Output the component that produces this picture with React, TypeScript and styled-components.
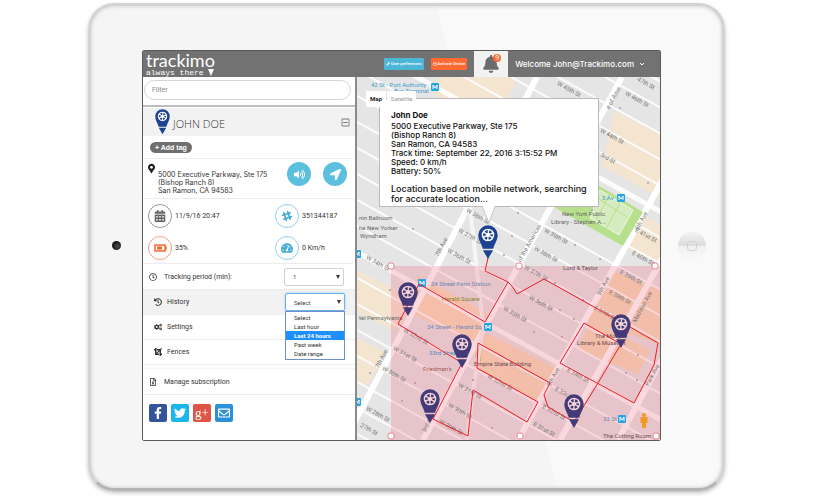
import React from "react";
import styled, { createGlobalStyle } from "styled-components";
import {
  FaBell,
  FaCalendarAlt,
  FaCogs,
  FaCrop,
  FaFacebookF,
  FaHistory,
  FaLocationArrow,
  FaMapMarkerAlt,
  FaPowerOff,
  FaRegClock,
  FaRegEnvelope,
  FaRegFileExcel,
  FaRegMinusSquare,
  FaSlackHash,
  FaTachometerAlt,
  FaTwitter,
  FaVolumeUp,
  FaWrench,
} from "react-icons/fa";

const GlobalStyle = createGlobalStyle`
  *, *::before, *::after { box-sizing: border-box; }
  body { margin: 0; background: #fff; font-family: Roboto, sans-serif; color: #333; }
  button, input, select { font-family: inherit; margin: 0; }
  h1, h2, p, ul, dl, dd { margin: 0; padding: 0; }
`;

const geometric = `Inter, "Liberation Sans", sans-serif`;

const Page = styled.main`
  padding: 3px 96px 5px 88px;
  overflow: hidden;
`;

const Tablet = styled.div`
  display: grid;
  grid-template-columns: 51px minmax(0, 1fr) 61px;
  align-items: center;
  padding: 44px 0 47px;
  border: 3px solid #d3d3d3;
  border-bottom-color: #b4b4b4;
  border-radius: 26px;
  background: linear-gradient(76deg, #f5f5f5 62%, #f9f9f9 62%);
  box-shadow: inset 0 0 3px 1px #d8d8d8, 0 2px 5px -1px rgba(0, 0, 0, 0.35);
`;

const Camera = styled.span`
  justify-self: center;
  width: 9px;
  height: 9px;
  border-radius: 50%;
  background: radial-gradient(circle at 60% 60%, #4a4a55, #111 70%);
`;

const HomeButton = styled.button`
  display: grid;
  place-items: center;
  justify-self: center;
  width: 28px;
  height: 28px;
  padding: 0;
  border: 0;
  border-radius: 50%;
  background: linear-gradient(#f1f1f1, #dcdcdc 50%, #f0f0f0 50%, #f8f8f8);
  &::after {
    content: "";
    width: 10px;
    height: 10px;
    border: 1px solid #d2d2d2;
    border-radius: 3px;
  }
`;

const Screen = styled.div`
  border: 1px solid #5a5a5a;
  border-radius: 2px;
  background: #fff;
  overflow: hidden;
`;

const Header = styled.header`
  display: flex;
  align-items: center;
  height: 26px;
  background: #727272;
  color: #fff;
`;

const Brand = styled.a`
  position: relative;
  display: grid;
  margin-left: 3px;
  margin-right: auto;
  color: #fff;
  text-decoration: none;
`;

const BrandName = styled.span`
  font: 400 18px/17px Lato, sans-serif;
`;

const BrandTag = styled.span`
  font: 8px/8px "Liberation Mono", monospace;
`;

const BrandTip = styled.svg`
  position: absolute;
  right: 0;
  bottom: 1px;
  width: 8px;
  height: 7px;
`;

const ActionButton = styled.button<{ $color: string }>`
  display: flex;
  align-items: center;
  justify-content: center;
  gap: 1px;
  height: 12px;
  margin-right: 7px;
  padding: 0 2px;
  border: 0;
  border-radius: 1px;
  background: ${(p) => p.$color};
  color: #fff;
  font-size: 4px;
  font-weight: 500;
  line-height: 12px;
`;

const BellButton = styled.button`
  position: relative;
  display: grid;
  place-items: center;
  width: 34px;
  height: 26px;
  padding: 0;
  border: 0;
  background: #f2f2f2;
  color: #6c6c6c;
  font-size: 18px;
`;

const Badge = styled.span`
  position: absolute;
  top: 3px;
  right: 7px;
  width: 8px;
  height: 8px;
  border-radius: 50%;
  background: #ff6a33;
  color: #fff;
  font: 7px/8px Roboto, sans-serif;
`;

const UserMenu = styled.button`
  display: flex;
  align-items: center;
  gap: 5px;
  padding: 0 15px 0 7px;
  border: 0;
  background: none;
  color: #fff;
  font: 500 8px/12px ${geometric};
  white-space: nowrap;
`;

const Body = styled.div`
  display: grid;
  grid-template-columns: minmax(214px, 2fr) minmax(0, 3fr);
`;

const Sidebar = styled.aside`
  border-right: 2px solid #8a8a8a;
  background: #fff;
`;

const FilterBar = styled.div`
  padding: 3px 4px 5px 1px;
  border-bottom: 2px solid #bdbdbd;
  margin-bottom: 1px;
`;

const FilterInput = styled.input`
  display: block;
  width: 100%;
  height: 20px;
  padding: 0 7px;
  border: 1px solid #d6d6d6;
  border-radius: 10px;
  font-size: 7px;
  &::placeholder { color: #888; }
`;

const NameBar = styled.div`
  display: flex;
  align-items: center;
  height: 28px;
  padding: 0 5px 0 11px;
  background: #f2f2f2;
`;

const Name = styled.h1`
  flex: 1;
  margin-left: 2px;
  padding-top: 4px;
  color: #333;
  font: 300 11px/14px "Open Sans", sans-serif;
`;

const IconButton = styled.button`
  display: flex;
  padding: 0;
  border: 0;
  background: none;
  color: #777;
  font-size: 9px;
`;

const Section = styled.div`
  display: flex;
  border-bottom: 1px solid #ececec;
  margin-right: 2px;
`;

const TagSection = styled(Section)`
  height: 23px;
  align-items: center;
  padding-left: 7px;
`;

const TagButton = styled.button`
  height: 11px;
  padding: 0 5px;
  border: 0;
  border-radius: 6px;
  background: #6f6f6f;
  color: #fff;
  font: bold 7px/11px "Liberation Sans", sans-serif;
`;

const AddressSection = styled(Section)`
  height: 40px;
  gap: 3px;
  padding: 3px 6px 0 5px;
`;

const AddressPin = styled(FaMapMarkerAlt)`
  flex: none;
  width: 7px;
  height: 11px;
  margin-top: 1px;
  color: #222;
`;

const Address = styled.p`
  flex: 1;
  padding-top: 9px;
  color: #333;
  font: 7px/8px ${geometric};
  white-space: nowrap;
`;

const RoundButton = styled.button`
  display: grid;
  place-items: center;
  width: 24px;
  height: 24px;
  margin-left: 9px;
  padding: 0;
  border: 0;
  border-radius: 50%;
  background: #5bbfdd;
  color: #fff;
  font-size: 11px;
`;

const Stats = styled.dl`
  display: grid;
  grid-template-columns: 127px 1fr;
  row-gap: 8px;
  height: 65px;
  margin-right: 2px;
  padding: 5px 0 3px 5px;
  border-bottom: 1px solid #ececec;
`;

const Stat = styled.div`
  display: flex;
  align-items: center;
  gap: 3px;
  height: 24px;
  font-size: 7px;
  line-height: 10px;
`;

const StatIcon = styled.dt<{ $ring: string; $ink: string }>`
  display: grid;
  place-items: center;
  width: 24px;
  height: 24px;
  border: 1px solid ${(p) => p.$ring};
  border-radius: 50%;
  color: ${(p) => p.$ink};
  font-size: 12px;
`;

const MenuRow = styled.div<{ $active?: boolean; $inset?: boolean }>`
  position: relative;
  display: flex;
  align-items: center;
  gap: ${(p) => (p.$inset ? 5 : 7)}px;
  height: ${(p) => (p.$inset ? 25 : 26)}px;
  padding: 0 ${(p) => (p.$inset ? 10 : 11)}px 0 ${(p) => (p.$inset ? 11 : 6)}px;
  border-bottom: 1px solid #ececec;
  background: ${(p) => (p.$active ? "#f2f2f2" : "transparent")};
  font-size: 7px;
  line-height: 12px;
  > svg { width: 8px; height: 8px; flex: none; }
`;

const RowLabel = styled.label`
  flex: 1;
`;

const RowLink = styled.a`
  color: inherit;
  text-decoration: none;
`;

const SelectBox = styled.select<{ $open?: boolean }>`
  appearance: none;
  width: 60px;
  height: 18px;
  padding: 0 8px;
  border: 1px solid ${(p) => (p.$open ? "#6cb2ea" : "#d0d0d0")};
  border-radius: 2px;
  box-shadow: ${(p) => (p.$open ? "0 0 3px #a8d4f7" : "none")};
  background: #fff;
  color: #444;
  font-size: 6px;
`;

const SelectWrap = styled.div`
  position: relative;
  display: flex;
`;

const Caret = styled.svg`
  position: absolute;
  right: 4px;
  top: 7px;
  width: 4px;
  height: 4px;
  pointer-events: none;
`;

const Options = styled.ul`
  position: absolute;
  z-index: 2;
  top: 18px;
  left: 0;
  right: 0;
  padding: 1px 0;
  border: 1px solid #6f8fc9;
  background: #fff;
  list-style: none;
  font-size: 6px;
  line-height: 9px;
`;

const Option = styled.li<{ $selected?: boolean }>`
  padding-left: 8px;
  background: ${(p) => (p.$selected ? "#1e8fff" : "transparent")};
  color: ${(p) => (p.$selected ? "#fff" : "#333")};
  font-weight: ${(p) => (p.$selected ? "bold" : "normal")};
`;

const Manage = styled.div`
  margin-top: 3px;
  border-top: 1px solid #f3f3f3;
`;

const Social = styled.nav`
  display: flex;
  gap: 4px;
  padding: 9px 6px 18px;
`;

const SocialLink = styled.a<{ $color: string }>`
  display: grid;
  place-items: center;
  width: 18px;
  height: 18px;
  border-radius: 2px;
  background: ${(p) => p.$color};
  color: #fff;
  font-size: 12px;
  text-decoration: none;
`;

const PlusMark = styled.span`
  font: 13px/14px "Liberation Serif", serif;
`;

const MapPane = styled.section`
  position: relative;
  overflow: hidden;
  background: #e6e6e6;
`;

const MapDrawing = styled.svg`
  position: absolute;
  inset: 0;
  width: 100%;
  height: 100%;
`;

const MapTypes = styled.div`
  position: absolute;
  z-index: 2;
  top: 14px;
  left: 9px;
  display: flex;
  gap: 1px;
`;

const MapType = styled.button<{ $on?: boolean }>`
  height: 16px;
  padding: 0 4px;
  border: 0;
  background: #fff;
  color: ${(p) => (p.$on ? "#222" : "#999")};
  font: ${(p) => (p.$on ? 700 : 400)} 6px/16px Roboto, sans-serif;
`;

const Popup = styled.article`
  position: absolute;
  top: 21px;
  left: 22px;
  width: 220px;
  padding: 12px 0 2px 11px;
  border: 1px solid #b9b9b9;
  background: #fff;
  color: #111;
  font: 500 8px/9px ${geometric};
  white-space: nowrap;
`;

const PopupTitle = styled.h2`
  font: bold 8px/9px ${geometric};
  margin-bottom: 2px;
`;

const PopupNote = styled.p`
  margin-top: 8px;
  font-size: 9px;
  line-height: 10px;
`;

const PopupTail = styled.svg`
  position: absolute;
  top: 100%;
  left: 100px;
  width: 18px;
  height: 18px;
`;

function PinShape({ color, disc }: { color: string; disc: string }) {
  return (
    <>
      <path
        d="M0 -9.7a9.7 9.7 0 0 1 9.7 9.7c0 5.2-3 8.4-4.5 13.8h-10.4c-1.5-5.4-4.5-8.6-4.5-13.8a9.7 9.7 0 0 1 9.7-9.7z"
        fill={color}
      />
      <path d="M-5 15.2h10l-5 8.8z" fill={color} />
      <circle r="6.3" fill={disc} />
      <circle r="3.6" fill="none" stroke={color} strokeWidth="2.6" strokeDasharray="2.37 1.4" strokeDashoffset="1.2" />
    </>
  );
}

const avenues = [
  "M345 440L537 77",
  "M423 440L622 77",
  "M518 440L666 174",
  "M560 440L666 252",
  "M618 440L666 352",
];

const streetLabels: [string, number, number][] = [
  ["W 45th St", 568, 89],
  ["W 46th St", 636, 99],
  ["47th St", 645, 83],
  ["W 44th St", 611, 136],
  ["3rd St", 607, 158],
  ["W 38th St", 477, 216],
  ["W 37th St", 469, 236],
  ["W 36th St", 458, 256],
  ["W 34th St", 377, 263],
  ["W 39th St", 555, 236],
  ["W 38th St", 545, 254],
  ["W 37th St", 535, 273],
  ["W 36th St", 540, 303],
  ["W 35th St", 514, 314],
  ["E 41st St", 645, 235],
  ["E 40th St", 642, 258],
  ["E 39th St", 630, 277],
  ["E 38th St", 619, 297],
  ["E 37th St", 604, 313],
  ["W 32nd St", 415, 336],
  ["W 31st St", 404, 354],
  ["W 30th St", 393, 374],
  ["W 28th St", 377, 414],
  ["27th St", 368, 429],
  ["W 32nd St", 499, 382],
  ["W 31st St", 469, 391],
  ["W 30th St", 459, 411],
  ["W 29th St", 450, 427],
  ["E 34th St", 577, 375],
  ["E 33rd St", 565, 394],
  ["E 32nd St", 553, 412],
  ["E 31st St", 543, 429],
];

const avenueLabels: [string, number, number][] = [
  ["7th Ave", 441, 248],
  ["7th Ave", 381, 360],
  ["of the Americas", 529, 244],
  ["e of Ame", 613, 99],
  ["5th Ave", 603, 287],
  ["5th Ave", 553, 378],
  ["5th Ave", 641, 222],
  ["Madison Ave", 642, 308],
  ["Park Ave", 652, 376],
  ["3rd Ave", 428, 424],
];

const places: [string, number, number, string][] = [
  ["42 St - Port Authority", 371, 87, "#3d9ccc"],
  ["Bus Terminal", 394, 93, "#3d9ccc"],
  ["nin Ballroom", 359, 220, "#666"],
  ["he New Yorker", 359, 230, "#666"],
  ["Wyndham", 360, 238, "#666"],
  ["New York Public", 562, 216, "#666"],
  ["Library - Stephen A...", 551, 224, "#666"],
  ["5 Av", 602, 200, "#3d9ccc"],
];

const fencedPlaces: [string, number, number, string][] = [
  ["34 Street Penn Station", 431, 286, "#6c88b8"],
  ["Herald Square", 442, 301, "#858528"],
  ["34 Street - Herald Sq", 427, 329, "#6c88b8"],
  ["33rd Street", 429, 355, "#4b8fc0"],
  ["Friedman's", 423, 371, "#a65a50"],
  ["Empire State Building", 474, 366, "#6b4a52"],
  ["tel Pennsylvania", 359, 320, "#666"],
  ["Lord & Taylor", 563, 270, "#5d4a5e"],
  ["The Morgan", 595, 338, "#6b4a52"],
  ["Library & Museum", 577, 345, "#6b4a52"],
  ["33 St", 603, 421, "#6c88b8"],
  ["The Cutting Room", 603, 438, "#6b4a52"],
];

const stations = [[435, 87], [621, 198], [357, 254], [357, 402], [422, 283], [488, 327], [622, 419]];
const handles = [[391, 266], [519, 266], [655, 266], [391, 436], [520, 436], [656, 436]];
const pins = [[408, 292], [621, 324], [462, 344], [430, 399], [574, 404]];
const dots = [
  [413, 229], [504, 255], [518, 213], [512, 236], [390, 290], [575, 245], [600, 259], [592, 210],
  [583, 300], [555, 283], [560, 310], [574, 319], [534, 332], [562, 337], [492, 428], [415, 383],
  [402, 401], [370, 373], [638, 355], [626, 373], [637, 380], [620, 108], [648, 183], [473, 380],
];

function CityMap() {
  const streets = Array.from({ length: 26 }, (_, i) => 275 + 26 * (i - 14));
  return (
    <MapDrawing viewBox="357 77 303 363" preserveAspectRatio="xMinYMin slice" role="img" aria-label="Map of midtown Manhattan">
      <rect x="357" y="77" width="303" height="363" fill="#e5e5e5" />
      <g fill="#f3e5d0">
        <path d="M440 77h78l-12 24h-62l-16-12z" />
        <path d="M614 110l46 24v64l-58-32z" />
        <path d="M634 210l26 14v40l-34-16z" />
        <path d="M357 270l60 31-22 30-38-20z" />
        <path d="M357 338l28 14-18 34-10-2z" />
        <path d="M418 276l70 38-14 30-72-36z" fill="#f6dcb8" />
        <path d="M480 330l80 40-20 34-64-34z" fill="#f6dcb8" />
        <path d="M612 270l48 20v54l-76-24z" fill="#f6dcb8" />
        <path d="M590 320l60 30-12 24-60-24z" fill="#f6dcb8" />
      </g>
      <path d="M482 338l-7 18 6 6z" fill="#b5d77b" />
      {streets.map((y, i) => (
        <path key={y} d={`M350 ${y - 105}L670 ${y + 72}`} stroke="#fff" strokeWidth={i === 9 || i === 17 ? 5 : 2} opacity="0.9" />
      ))}
      {avenues.map((d) => (
        <path key={d} d={d} stroke="#fff" strokeWidth="6" />
      ))}
      <path d="M467 440L474 385L483 326L470 207" stroke="#f6f6f6" strokeWidth="4" fill="none" />
      <path d="M586 178L643 212L623 246L552 206z" fill="#b7e08c" />
      <path d="M600 190L633 210L619 235L590 218z" fill="#d6ecc0" stroke="#eef8e2" strokeWidth="1" />
      <path d="M596 197l31 20M610 194l-14 26M620 203l-14 26" stroke="#b7e08c" strokeWidth="1" />
      <g fill="#9c9cc4">
        {dots.map(([x, y]) => (
          <circle key={`${x}-${y}`} cx={x} cy={y} r="1" />
        ))}
      </g>
      <rect x="391" y="266" width="269" height="174" fill="#f0647d" fillOpacity="0.25" />
      <g fontFamily="Roboto, sans-serif" fontSize="6" fill="#777" textAnchor="middle">
        {streetLabels.map(([t, x, y], i) => (
          <text key={i} transform={`translate(${x} ${y + 2}) rotate(29)`}>{t}</text>
        ))}
        {avenueLabels.map(([t, x, y], i) => (
          <text key={i} transform={`translate(${x + 2} ${y}) rotate(-61)`}>{t}</text>
        ))}
      </g>
      <g fontFamily="Roboto, sans-serif" fontSize="6">
        {[...places, ...fencedPlaces].map(([t, x, y, c]) => (
          <text key={t} x={x} y={y} fill={c}>{t}</text>
        ))}
      </g>
      {stations.map(([x, y]) => (
        <g key={`${x}-${y}`} transform={`translate(${x} ${y})`}>
          <rect x="-4" y="-4" width="8" height="8" rx="1" fill="#27a5e3" />
          <path d="M-2 2v-4l2 3 2-3v4" fill="none" stroke="#fff" />
        </g>
      ))}
      <g transform="translate(644 420)" fill="#f09a25">
        <circle cy="-5" r="2" />
        <path d="M-3.5-3h7v6h-1.500v5h-4v-5h-1.500z" />
      </g>
      <g fill="none" stroke="#ee1c25" strokeWidth="1">
        <path d="M488 258L485 271L508 282L512 286L517 294L544 279L621 322" />
        <path d="M508 282L485 322L419 284L398 324L462 363L433 419L468 436L473 390L527 422L538 402L477 368L478 343L550 383L544 395L548 407L574 422L598 383L621 344L584 323L560 363L634 403L654 365L658 343L630 327" />
      </g>
      {handles.map(([x, y]) => (
        <rect key={`${x}-${y}`} x={x - 3} y={y - 3} width="6" height="6" rx="2" fill="#fff" stroke="#e8808a" />
      ))}
      {pins.map(([x, y]) => (
        <g key={`${x}-${y}`} transform={`translate(${x} ${y})`}>
          <PinShape color="#433a77" disc="#f3d3d6" />
        </g>
      ))}
      <g transform="translate(488 235)">
        <PinShape color="#1d428f" disc="#fff" />
      </g>
    </MapDrawing>
  );
}

const DownCaret = () => (
  <Caret viewBox="0 0 4 4" aria-hidden="true">
    <path d="M0 0h4l-2 4z" fill="#333" />
  </Caret>
);

const historyRanges = ["Select", "Last hour", "Last 24 hours", "Past week", "Date range"];

export default function App() {
  return (
    <Page>
      <GlobalStyle />
      <Tablet>
        <Camera />
        <Screen>
          <Header>
            <Brand href="#">
              <BrandName>trackimo</BrandName>
              <BrandTag>always there</BrandTag>
              <BrandTip viewBox="0 0 8 7" aria-hidden="true">
                <path d="M1 0h6l-3 7z" fill="#fff" />
              </BrandTip>
            </Brand>
            <ActionButton $color="#4db5d6"><FaWrench />User preferences</ActionButton>
            <ActionButton $color="#ff6a33"><FaPowerOff />Activate Device</ActionButton>
            <BellButton aria-label="Notifications">
              <FaBell />
              <Badge>9</Badge>
            </BellButton>
            <UserMenu>
              Welcome John@Trackimo.com
              <svg width="6" height="4" viewBox="0 0 6 4" aria-hidden="true">
                <path d="M1 1l2 2 2-2" fill="none" stroke="#fff" />
              </svg>
            </UserMenu>
          </Header>
          <Body>
            <Sidebar>
              <FilterBar>
                <FilterInput aria-label="Filter" placeholder="Filter" />
              </FilterBar>
              <NameBar>
                <svg width="17" height="26" viewBox="-10 -10 20 35" aria-hidden="true">
                  <PinShape color="#1d428f" disc="#fff" />
                </svg>
                <Name>JOHN DOE</Name>
                <IconButton aria-label="Collapse"><FaRegMinusSquare /></IconButton>
              </NameBar>
              <TagSection>
                <TagButton>+ Add tag</TagButton>
              </TagSection>
              <AddressSection>
                <AddressPin />
                <Address>
                  5000 Executive Parkway, Ste 175<br />(Bishop Ranch 8)<br />San Ramon, CA 94583
                </Address>
                <RoundButton aria-label="Play sound"><FaVolumeUp /></RoundButton>
                <RoundButton aria-label="Locate"><FaLocationArrow /></RoundButton>
              </AddressSection>
              <Stats>
                <Stat>
                  <StatIcon $ring="#999" $ink="#666"><FaCalendarAlt /></StatIcon>
                  <dd>11/9/16 20:47</dd>
                </Stat>
                <Stat>
                  <StatIcon $ring="#8ed2ea" $ink="#45abd3"><FaSlackHash /></StatIcon>
                  <dd>351344187</dd>
                </Stat>
                <Stat>
                  <StatIcon $ring="#ff9a7a" $ink="#f9652f">
                    <svg width="13" height="8" viewBox="0 0 13 8" aria-hidden="true">
                      <path d="M1 1h10v2h1v2h-1v2h-10z" fill="none" stroke="currentColor" strokeWidth="1.500" />
                      <path d="M3 2.500h5v3h-5z" fill="currentColor" />
                    </svg>
                  </StatIcon>
                  <dd>35%</dd>
                </Stat>
                <Stat>
                  <StatIcon $ring="#8ed2ea" $ink="#45abd3"><FaTachometerAlt /></StatIcon>
                  <dd>0 Km/h</dd>
                </Stat>
              </Stats>
              <MenuRow>
                <FaRegClock />
                <RowLabel htmlFor="period">Tracking period (min):</RowLabel>
                <SelectWrap>
                  <SelectBox id="period"><option>1</option></SelectBox>
                  <DownCaret />
                </SelectWrap>
              </MenuRow>
              <MenuRow $active $inset>
                <FaHistory />
                <RowLabel htmlFor="history">History</RowLabel>
                <SelectWrap>
                  <SelectBox id="history" $open>
                    {historyRanges.map((r) => <option key={r}>{r}</option>)}
                  </SelectBox>
                  <DownCaret />
                  <Options role="listbox" aria-label="History range">
                    {historyRanges.map((r) => (
                      <Option key={r} role="option" aria-selected={r === "Last 24 hours"} $selected={r === "Last 24 hours"}>{r}</Option>
                    ))}
                  </Options>
                </SelectWrap>
              </MenuRow>
              <MenuRow $inset><FaCogs /><RowLink href="#">Settings</RowLink></MenuRow>
              <MenuRow $inset><FaCrop /><RowLink href="#">Fences</RowLink></MenuRow>
              <Manage>
                <MenuRow><FaRegFileExcel /><RowLink href="#">Manage subscription</RowLink></MenuRow>
              </Manage>
              <Social aria-label="Share">
                <SocialLink href="#" aria-label="Facebook" $color="#33539b"><FaFacebookF /></SocialLink>
                <SocialLink href="#" aria-label="Twitter" $color="#1cb7ea"><FaTwitter /></SocialLink>
                <SocialLink href="#" aria-label="Google Plus" $color="#dd5546"><PlusMark>g+</PlusMark></SocialLink>
                <SocialLink href="#" aria-label="Email" $color="#2b90d9"><FaRegEnvelope /></SocialLink>
              </Social>
            </Sidebar>
            <MapPane>
              <CityMap />
              <MapTypes>
                <MapType $on>Map</MapType>
                <MapType>Satellite</MapType>
              </MapTypes>
              <Popup>
                <PopupTitle>John Doe</PopupTitle>
                <p>
                  5000 Executive Parkway, Ste 175<br />(Bishop Ranch 8)<br />San Ramon, CA 94583<br />
                  Track time: September 22, 2016 3:15:52 PM<br />Speed: 0 km/h<br />Battery: 50%
                </p>
                <PopupNote>
                  Location based on mobile network, searching<br />for accurate location...
                </PopupNote>
                <PopupTail viewBox="0 0 18 18" aria-hidden="true">
                  <path d="M2 0l7 17l6-17z" fill="#fff" />
                  <path d="M2 0l7 17l6-17" fill="none" stroke="#c4c4c4" />
                </PopupTail>
              </Popup>
            </MapPane>
          </Body>
        </Screen>
        <HomeButton aria-label="Home" />
      </Tablet>
    </Page>
  );
}
